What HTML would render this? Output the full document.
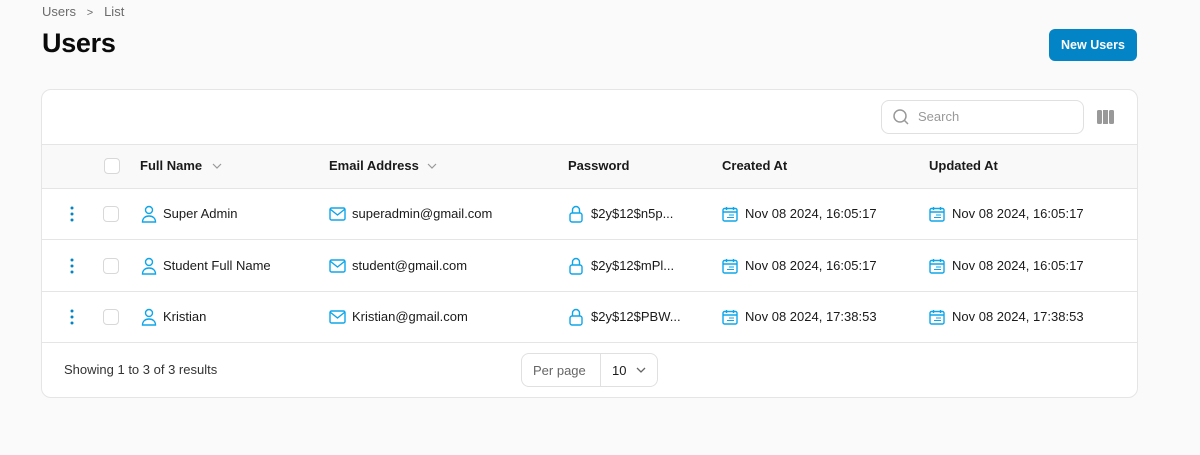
<!DOCTYPE html><html><head><style>
*{box-sizing:border-box;margin:0;padding:0}
body{width:1200px;height:455px;background:#fafafa;font-family:"Liberation Sans",sans-serif;color:#1a1a1a;position:relative;overflow:hidden}
.a{position:absolute}
.bc{left:42px;top:4px;font-size:13px;color:#6b6b6b}
h1{position:absolute;left:42px;top:28px;font-size:27px;font-weight:bold;letter-spacing:-0.3px;color:#0a0a0a}
.btn{left:1049px;top:29px;width:88px;height:32px;background:#0284c7;border-radius:6px;color:#fff;font-size:12.5px;font-weight:bold;text-align:center;line-height:32px}
.card{left:41px;top:89px;width:1097px;height:309px;background:#fff;border:1px solid #e5e5e5;border-radius:10px;overflow:hidden}
.search{left:839px;top:10px;width:203px;height:34px;border:1px solid #e0e0e0;border-radius:8px;font-size:13px;color:#999;padding:8px 0 0 36px}
.hdr{left:0;top:54px;width:1097px;height:45px;background:#f9f9f9;border-top:1px solid #e5e5e5;border-bottom:1px solid #e5e5e5}
.row{left:0;width:1097px;border-bottom:1px solid #e5e5e5}
.cb{width:16px;height:16px;border:1px solid #d8d8d8;border-radius:4px;background:#fff}
.t{font-size:13px;white-space:nowrap}
.h{font-size:13px;font-weight:bold;white-space:nowrap}
svg{position:absolute}
.r{position:absolute;left:0;width:1200px;height:20px}
</style></head><body>
<div class="a bc">Users &nbsp;&nbsp;<span style="font-size:11px">&gt;</span>&nbsp;&nbsp; List</div>
<h1>Users</h1>
<div class="a btn">New Users</div>
<div class="a card">
<div class="a search">Search</div>
<svg style="left:850px;top:18px" width="18" height="18" viewBox="0 0 18 18" fill="none" stroke="#999" stroke-width="1.5"><circle cx="8" cy="8" r="6"/><path d="M12.5 12.5L16 16"/></svg>
<svg style="left:1055px;top:20px" width="17" height="14" viewBox="0 0 17 14"><rect x="0" y="0" width="5" height="14" rx="1.5" fill="#999"/><rect x="6" y="0" width="5" height="14" fill="#999"/><rect x="12" y="0" width="5" height="14" rx="1.5" fill="#999"/></svg>
<div class="a hdr">
<div class="a cb" style="left:62px;top:13px"></div>
<div class="a h" style="left:98px;top:13px">Full Name</div>
<svg style="left:170px;top:18px" width="10" height="6" viewBox="0 0 10 6" fill="none" stroke="#999" stroke-width="1.2"><path d="M1 1l4 4 4-4"/></svg>
<div class="a h" style="left:287px;top:13px">Email Address</div>
<svg style="left:385px;top:18px" width="10" height="6" viewBox="0 0 10 6" fill="none" stroke="#999" stroke-width="1.2"><path d="M1 1l4 4 4-4"/></svg>
<div class="a h" style="left:526px;top:13px">Password</div>
<div class="a h" style="left:680px;top:13px">Created At</div>
<div class="a h" style="left:887px;top:13px">Updated At</div>
</div>
<div class="a row" style="top:99px;height:51px"></div>
<div class="a row" style="top:150px;height:52px"></div>
<div class="a row" style="top:202px;height:51px"></div>
</div>
<div class="r" style="top:204px">
<svg style="left:70px;top:2px" width="4" height="16"><circle cx="2" cy="2" r="1.5" fill="#0284c7"/><circle cx="2" cy="8" r="1.5" fill="#0284c7"/><circle cx="2" cy="14" r="1.5" fill="#0284c7"/></svg>
<div class="a cb" style="left:103px;top:2px"></div>
<svg style="left:141px;top:1px" width="16" height="18" viewBox="0 0 16 18" fill="none" stroke="#0ea5e9" stroke-width="1.4"><circle cx="8" cy="5" r="3.5"/><path d="M1.5 17c0-4 3-6 6.5-6s6.5 2 6.5 6z"/></svg>
<div class="a t" style="left:163px;top:2px">Super Admin</div>
<svg style="left:329px;top:3px" width="17" height="14" viewBox="0 0 17 14" fill="none" stroke="#0ea5e9" stroke-width="1.4"><rect x="1" y="1" width="15" height="12" rx="1.5"/><path d="M1 2l7.5 6 7.5-6"/></svg>
<div class="a t" style="left:352px;top:2px">superadmin@gmail.com</div>
<svg style="left:569px;top:1px" width="14" height="18" viewBox="0 0 14 18" fill="none" stroke="#0ea5e9" stroke-width="1.4"><path d="M3.5 8V5a3.5 3.5 0 017 0v3"/><rect x="1" y="8" width="12" height="9" rx="2"/></svg>
<div class="a t" style="left:591px;top:2px">$2y$12$n5p...</div>
<svg style="left:722px;top:2px" width="16" height="16" viewBox="0 0 16 16" fill="none" stroke="#0ea5e9" stroke-width="1.4"><rect x="1" y="2.5" width="14" height="12.5" rx="1.5"/><path d="M1 6h14M4.5 1v3M11.5 1v3"/><path d="M7 9h5M5 11.5h7" stroke-width="1"/></svg>
<div class="a t" style="left:745px;top:2px">Nov 08 2024, 16:05:17</div>
<svg style="left:929px;top:2px" width="16" height="16" viewBox="0 0 16 16" fill="none" stroke="#0ea5e9" stroke-width="1.4"><rect x="1" y="2.5" width="14" height="12.5" rx="1.5"/><path d="M1 6h14M4.5 1v3M11.5 1v3"/><path d="M7 9h5M5 11.5h7" stroke-width="1"/></svg>
<div class="a t" style="left:952px;top:2px">Nov 08 2024, 16:05:17</div>
</div>
<div class="r" style="top:256px">
<svg style="left:70px;top:2px" width="4" height="16"><circle cx="2" cy="2" r="1.5" fill="#0284c7"/><circle cx="2" cy="8" r="1.5" fill="#0284c7"/><circle cx="2" cy="14" r="1.5" fill="#0284c7"/></svg>
<div class="a cb" style="left:103px;top:2px"></div>
<svg style="left:141px;top:1px" width="16" height="18" viewBox="0 0 16 18" fill="none" stroke="#0ea5e9" stroke-width="1.4"><circle cx="8" cy="5" r="3.5"/><path d="M1.5 17c0-4 3-6 6.5-6s6.5 2 6.5 6z"/></svg>
<div class="a t" style="left:163px;top:2px">Student Full Name</div>
<svg style="left:329px;top:3px" width="17" height="14" viewBox="0 0 17 14" fill="none" stroke="#0ea5e9" stroke-width="1.4"><rect x="1" y="1" width="15" height="12" rx="1.5"/><path d="M1 2l7.5 6 7.5-6"/></svg>
<div class="a t" style="left:352px;top:2px">student@gmail.com</div>
<svg style="left:569px;top:1px" width="14" height="18" viewBox="0 0 14 18" fill="none" stroke="#0ea5e9" stroke-width="1.4"><path d="M3.5 8V5a3.5 3.5 0 017 0v3"/><rect x="1" y="8" width="12" height="9" rx="2"/></svg>
<div class="a t" style="left:591px;top:2px">$2y$12$mPl...</div>
<svg style="left:722px;top:2px" width="16" height="16" viewBox="0 0 16 16" fill="none" stroke="#0ea5e9" stroke-width="1.4"><rect x="1" y="2.5" width="14" height="12.5" rx="1.5"/><path d="M1 6h14M4.5 1v3M11.5 1v3"/><path d="M7 9h5M5 11.5h7" stroke-width="1"/></svg>
<div class="a t" style="left:745px;top:2px">Nov 08 2024, 16:05:17</div>
<svg style="left:929px;top:2px" width="16" height="16" viewBox="0 0 16 16" fill="none" stroke="#0ea5e9" stroke-width="1.4"><rect x="1" y="2.5" width="14" height="12.5" rx="1.5"/><path d="M1 6h14M4.5 1v3M11.5 1v3"/><path d="M7 9h5M5 11.5h7" stroke-width="1"/></svg>
<div class="a t" style="left:952px;top:2px">Nov 08 2024, 16:05:17</div>
</div>
<div class="r" style="top:307px">
<svg style="left:70px;top:2px" width="4" height="16"><circle cx="2" cy="2" r="1.5" fill="#0284c7"/><circle cx="2" cy="8" r="1.5" fill="#0284c7"/><circle cx="2" cy="14" r="1.5" fill="#0284c7"/></svg>
<div class="a cb" style="left:103px;top:2px"></div>
<svg style="left:141px;top:1px" width="16" height="18" viewBox="0 0 16 18" fill="none" stroke="#0ea5e9" stroke-width="1.4"><circle cx="8" cy="5" r="3.5"/><path d="M1.5 17c0-4 3-6 6.5-6s6.5 2 6.5 6z"/></svg>
<div class="a t" style="left:163px;top:2px">Kristian</div>
<svg style="left:329px;top:3px" width="17" height="14" viewBox="0 0 17 14" fill="none" stroke="#0ea5e9" stroke-width="1.4"><rect x="1" y="1" width="15" height="12" rx="1.5"/><path d="M1 2l7.5 6 7.5-6"/></svg>
<div class="a t" style="left:352px;top:2px">Kristian@gmail.com</div>
<svg style="left:569px;top:1px" width="14" height="18" viewBox="0 0 14 18" fill="none" stroke="#0ea5e9" stroke-width="1.4"><path d="M3.5 8V5a3.5 3.5 0 017 0v3"/><rect x="1" y="8" width="12" height="9" rx="2"/></svg>
<div class="a t" style="left:591px;top:2px">$2y$12$PBW...</div>
<svg style="left:722px;top:2px" width="16" height="16" viewBox="0 0 16 16" fill="none" stroke="#0ea5e9" stroke-width="1.4"><rect x="1" y="2.5" width="14" height="12.5" rx="1.5"/><path d="M1 6h14M4.5 1v3M11.5 1v3"/><path d="M7 9h5M5 11.5h7" stroke-width="1"/></svg>
<div class="a t" style="left:745px;top:2px">Nov 08 2024, 17:38:53</div>
<svg style="left:929px;top:2px" width="16" height="16" viewBox="0 0 16 16" fill="none" stroke="#0ea5e9" stroke-width="1.4"><rect x="1" y="2.5" width="14" height="12.5" rx="1.5"/><path d="M1 6h14M4.5 1v3M11.5 1v3"/><path d="M7 9h5M5 11.5h7" stroke-width="1"/></svg>
<div class="a t" style="left:952px;top:2px">Nov 08 2024, 17:38:53</div>
</div>
<div class="a t" style="left:64px;top:362px;color:#333">Showing 1 to 3 of 3 results</div>
<div class="a" style="left:521px;top:353px;width:137px;height:34px;border:1px solid #e0e0e0;border-radius:8px">
<div class="a t" style="left:11px;top:9px;color:#666">Per page</div>
<div class="a" style="left:78px;top:0;width:1px;height:32px;background:#e0e0e0"></div>
<div class="a t" style="left:90px;top:9px">10</div>
<svg style="left:114px;top:13px" width="10" height="7" viewBox="0 0 10 7" fill="none" stroke="#666" stroke-width="1.3"><path d="M1 1l4 4 4-4"/></svg>
</div>
</body></html>
